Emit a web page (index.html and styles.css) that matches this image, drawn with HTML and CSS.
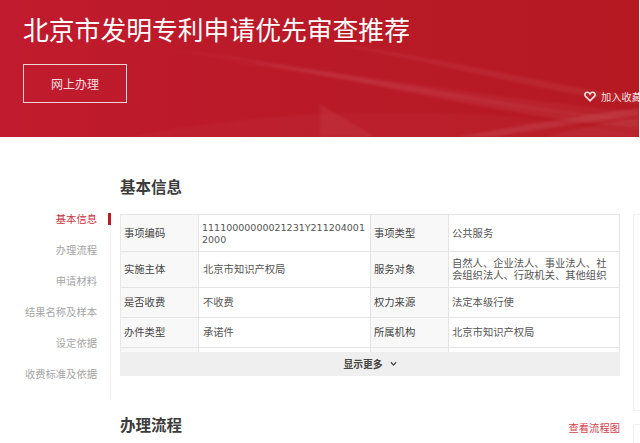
FILE: index.html
```html
<!DOCTYPE html>
<html lang="zh-CN">
<head>
    <meta charset="UTF-8">
    <title>北京市发明专利申请优先审查推荐</title>
    <link rel="stylesheet" href="styles.css">
</head>
<body>
    <div class="banner">
        <svg class="waves" viewBox="0 0 639 137" preserveAspectRatio="none">
            <defs><filter id="soft"><feGaussianBlur stdDeviation="1.2"/></filter></defs>
            <g fill="#fff" filter="url(#soft)">
                <path d="M150 48 C300 62 480 116 639 128 L639 120 C480 104 300 60 150 48Z" opacity=".05"/>
                <path d="M220 60 C340 76 500 112 639 120 L639 112 C500 100 340 70 220 60Z" opacity=".04"/>
                <path d="M320 42 C430 60 540 92 639 104 L639 97 C540 84 430 54 320 42Z" opacity=".05"/>
                <path d="M130 137 C300 104 500 104 639 137Z" opacity=".025"/>
                <path d="M320 104 C340 116 360 128 375 137 L320 137Z" opacity=".05"/>
                <path d="M455 137 C520 126 590 114 639 108 L639 115 C590 122 530 130 495 137Z" opacity=".08"/>
                <path d="M545 137 C580 128 610 122 639 118 L639 137Z" opacity=".05"/>
            </g>
        </svg>
        <h1 class="title">北京市发明专利申请优先审查推荐</h1>
        <div class="banner-row">
            <a class="btn-online">网上办理</a>
            <div class="fav">
                <svg class="heart" viewBox="0 0 12 11"><path d="M6 9.8 1.6 5.4C.2 3.9 1 1.2 3.2 1.2 4.6 1.2 5.5 2 6 3 6.5 2 7.4 1.2 8.8 1.2 11 1.2 11.8 3.9 10.4 5.4Z"/></svg>
                <span>加入收藏</span>
            </div>
        </div>
    </div><!--banner-->

    <div class="main">
        <div class="side">
            <a class="on">基本信息</a>
            <a>办理流程</a>
            <a>申请材料</a>
            <a>结果名称及样本</a>
            <a>设定依据</a>
            <a>收费标准及依据</a>
        </div><!--side-->

        <div class="content">
            <h2 class="sec-title">基本信息</h2>
            <div class="info">
                <div class="row row1">
                    <b>事项编码</b><span class="code">11110000000021231Y2112040012000</span>
                    <b>事项类型</b><span>公共服务</span>
                </div>
                <div class="row row2">
                    <b>实施主体</b><span>北京市知识产权局</span>
                    <b>服务对象</b><span>自然人、企业法人、事业法人、社会组织法人、行政机关、其他组织</span>
                </div>
                <div class="row row3">
                    <b>是否收费</b><span>不收费</span>
                    <b>权力来源</b><span>法定本级行使</span>
                </div>
                <div class="row row3">
                    <b>办件类型</b><span>承诺件</span>
                    <b>所属机构</b><span>北京市知识产权局</span>
                </div>
                <div class="row row-end"><b></b><span></span><b></b><span></span></div>
            </div>
            <div class="more">显示更多
                <svg class="arrow" viewBox="0 0 8 6"><path d="M1 1 4 4.2 7 1"/></svg>
            </div>
            <div class="sec-head">
                <h2 class="sec-title">办理流程</h2>
                <a class="flow-link">查看流程图</a>
            </div>
        </div><!--content-->

        <div class="aside">
            <div class="aside-box box1"></div>
            <div class="aside-box box2"></div>
        </div>
    </div><!--main-->
</body>
</html>
```

FILE: styles.css
```css
*{
    margin:0;
    padding:0;
    box-sizing:border-box;
}

html,body{
    height:443px;
    overflow:hidden;
    background:#fff;
}

body{
    font-family:"Liberation Sans","Noto Sans CJK SC",sans-serif;
    font-size:10.3px;
    color:#555;
}

.banner{
    position:relative;
    width:639px;
    height:137px;
    padding:16px 0 0 23px;
    overflow:hidden;
    color:#fff;
    background:linear-gradient(90deg,#c01b2e 0%,#ba1a28 45%,#b51922 100%);
}

.waves{
    position:absolute;
    left:0;
    top:0;
    width:100%;
    height:100%;
}

.title{
    position:relative;
    font-size:25.8px;
    font-weight:400;
    line-height:30px;
    white-space:nowrap;
}

.banner-row{
    position:relative;
    display:flex;
    align-items:flex-end;
    justify-content:space-between;
    margin-top:18px;
}

.btn-online{
    display:flex;
    align-items:center;
    justify-content:center;
    width:104px;
    height:39px;
    border:1px solid #f0d4d6;
    font-size:12px;
    color:#f6dfe0;
}

.fav{
    display:flex;
    align-items:center;
    flex:none;
    width:55px;
    margin-bottom:-1px;
    color:#f3dcdd;
    white-space:nowrap;
    overflow:hidden;
}

.heart{
    flex:none;
    width:12px;
    height:11px;
    margin-right:5px;
    fill:none;
    stroke:#f7e6e6;
    stroke-width:1.6;
}

.main{
    display:flex;
    width:640px;
}

.side{
    flex:none;
    width:111px;
    height:187px;
    margin-top:76px;
    border-right:1px solid #eee;
    display:flex;
    flex-direction:column;
    text-align:right;
    color:#a4a4a4;
}

.side a{
    position:relative;
    height:31px;
    line-height:13px;
    padding-right:13px;
    white-space:nowrap;
}

.side a.on{
    color:#c8323e;
}

.side a.on::after{
    content:"";
    position:absolute;
    right:-1px;
    top:0;
    width:3px;
    height:12px;
    background:#b81a26;
}

.content{
    flex:none;
    width:500px;
    margin-left:9px;
}

.sec-title{
    font-size:15.5px;
    font-weight:700;
    line-height:20px;
    color:#3c3c3c;
}

.content > .sec-title{
    margin-top:41px;
}

.info{
    margin-top:16px;
    border-top:1px solid #e4e4e4;
    border-left:1px solid #e8e8e8;
    border-right:1px solid #e4e4e4;
}

.row{
    display:grid;
    grid-template-columns:78px 172px 78px 1fr;
    border-bottom:1px solid #e4e4e4;
}

.row b,.row span{
    display:flex;
    align-items:center;
    padding:1px 4px 0;
    line-height:12px;
}

.row b{
    padding-left:3px;
    font-weight:400;
    color:#444;
    background:#f8f8f8;
    border-right:1px solid #e4e4e4;
}

.row b:nth-child(3){
    width:79px;
    margin-left:-1px;
    border-left:1px solid #e4e4e4;
}

.row span:last-child{
    padding:1px 10px 0 3px;
}

.row1{
    height:37px;
}

.row2{
    height:36px;
}

.row3{
    height:30px;
}

.row-end{
    height:4px;
    border-bottom:0;
}

.row span.code{
    display:block;
    padding:7px 3px 0;
    font-family:"DejaVu Sans",sans-serif;
    font-size:9.5px;
    word-break:break-all;
}

.more{
    display:flex;
    align-items:center;
    justify-content:center;
    height:24px;
    background:#efefef;
    font-size:9.8px;
    font-weight:700;
    color:#444;
}

.arrow{
    width:7px;
    height:6px;
    margin-left:7px;
    fill:none;
    stroke:#444;
    stroke-width:1.3;
}

.sec-head{
    display:flex;
    align-items:flex-end;
    justify-content:space-between;
    margin-top:40px;
}

.flow-link{
    margin-bottom:1px;
    line-height:13px;
    color:#d2414a;
}

.aside{
    flex:none;
    width:20px;
    margin-left:13px;
    display:flex;
    flex-direction:column;
}

.aside-box{
    border:1px solid #f0f0f0;
}

.box1{
    height:197px;
    margin-top:77px;
}

.box2{
    height:30px;
    margin-top:13px;
}
```
